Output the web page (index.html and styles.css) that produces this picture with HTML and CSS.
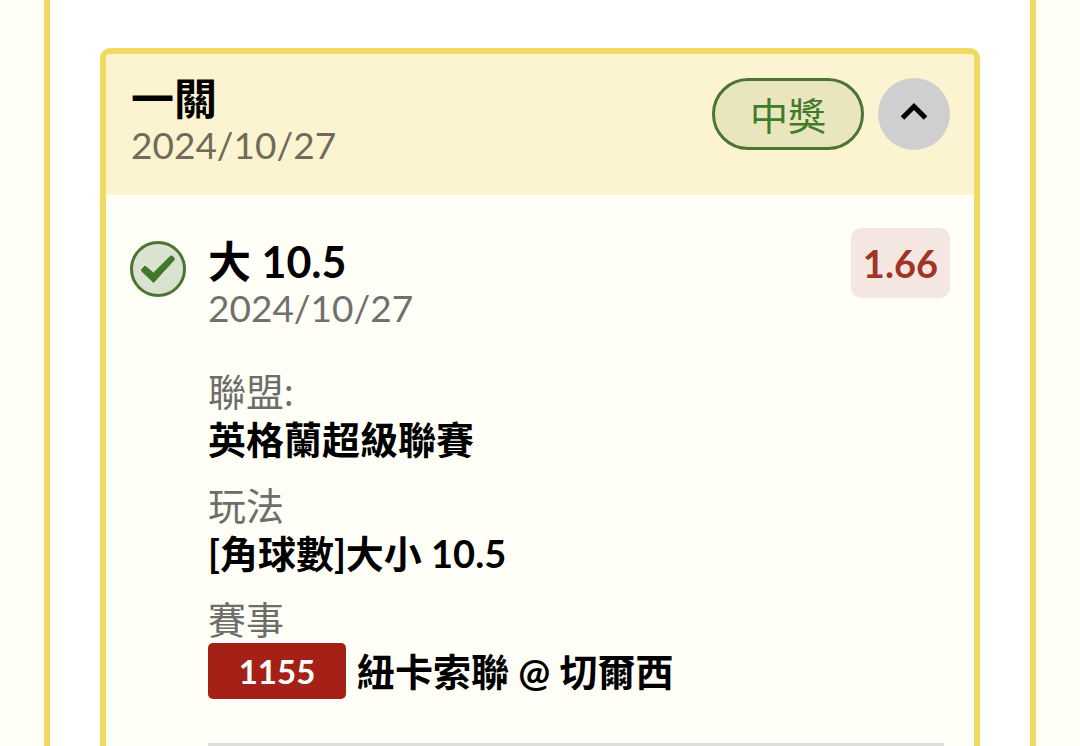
FILE: index.html
```html
<!DOCTYPE html>
<html lang="zh-Hant">
<head>
<meta charset="utf-8">
<meta name="viewport" content="width=device-width, initial-scale=1">
<title>一關</title>
<link rel="stylesheet" href="styles.css">
</head>
<body>
<main class="panel">
  <article class="ticket">
    <header class="ticket-head">
      <div class="heading">
        <h1 class="title">一關</h1>
        <time class="date" datetime="2024-10-27">2024/10/27</time>
      </div>
      <div class="actions">
        <span class="status">中獎</span>
        <button class="toggle" type="button" aria-label="收合" aria-expanded="true">
          <svg class="chevron" viewBox="0 0 28 20" aria-hidden="true"><path d="M2.500 16 14 4.500 25.500 16"/></svg>
        </button>
      </div>
    </header>
    <section class="bet">
      <div class="mark">
        <svg viewBox="0 0 56 56" aria-hidden="true"><path class="tick" d="M11.500 28.500 15 25 23.500 32 40 15.500Q43 13.500 44.500 18.500L23.500 41.500 11.500 30Z"/></svg>
      </div>
      <div class="bet-main">
        <div class="bet-head">
          <div class="heading">
            <h2 class="title">大 10.5</h2>
            <time class="date" datetime="2024-10-27">2024/10/27</time>
          </div>
          <span class="odds">1.66</span>
        </div>
        <dl class="details">
          <div><dt>聯盟:</dt><dd>英格蘭超級聯賽</dd></div>
          <div><dt>玩法</dt><dd>[角球數]大小 10.5</dd></div>
          <div><dt>賽事</dt><dd class="match"><span class="code">1155</span><span>紐卡索聯 @ 切爾西</span></dd></div>
        </dl>
        <hr class="rule">
      </div>
    </section>
  </article>
</main>
</body>
</html>
```
FILE: styles.css
```css
* {
  box-sizing: border-box;
}

body {
  margin: 0;
  height: 100vh;
  overflow: hidden;
  background: #fffff7;
  color: #000;
  font-family: Lato, "Noto Sans CJK TC", sans-serif;
  font-size: 38px;
  line-height: 48px;
}

.panel {
  min-height: 100vh;
  margin: 0 44px;
  padding: 48px 50px 0;
  border: solid #f0da62;
  border-width: 0 6px;
  background: #fff;
}

.ticket {
  border: 6px solid #f0da62;
  border-radius: 10px;
  background: #fffff7;
  overflow: hidden;
}

.ticket-head {
  display: flex;
  justify-content: space-between;
  align-items: flex-start;
  padding: 22px 24px 27px 25px;
  background: #fcf3d0;
}

.title {
  margin: 0;
  font-size: 43px;
  font-weight: 700;
  line-height: 46px;
}

.date {
  display: block;
  font-size: 37px;
  line-height: 46px;
  color: #6f6b5a;
}

.actions {
  display: flex;
  gap: 14px;
  padding-top: 2px;
}

.status {
  height: 72px;
  padding: 0 35px;
  border: 3px solid #4c7433;
  border-radius: 36px;
  background: #e9e6be;
  color: #427a2d;
  line-height: 68px;
}

.toggle {
  display: grid;
  place-items: center;
  width: 72px;
  height: 72px;
  padding: 0;
  border: 0;
  border-radius: 50%;
  background: #cfcfd0;
}

.chevron {
  width: 28px;
  height: 20px;
  margin-bottom: 4px;
  fill: none;
  stroke: #000;
  stroke-width: 5;
}

.bet {
  display: flex;
  gap: 22px;
  padding: 33px 24px 24px;
}

.mark {
  flex: none;
  width: 56px;
  height: 56px;
  margin-top: 13px;
  border: 3px solid #4c7433;
  border-radius: 50%;
  background: #dae2d0;
}

.mark svg {
  display: block;
  width: 56px;
  height: 56px;
  margin: -3px;
}

.tick {
  fill: #41792a;
  stroke: #41792a;
  stroke-width: 1;
  stroke-linejoin: round;
}

.bet-main {
  flex: 1;
}

.bet-head {
  display: flex;
  justify-content: space-between;
  align-items: flex-start;
}

.bet-head .heading {
  padding-top: 11px;
}

.bet-head .date {
  color: #70706d;
}

.odds {
  padding: 0 12px;
  border-radius: 10px;
  background: #f4e7e1;
  color: #a23327;
  font-weight: 700;
  line-height: 70px;
}

.details {
  display: grid;
  gap: 18px;
  margin: 36px 0 0;
}

.details dt {
  color: #6d6d69;
}

.details dd {
  margin: 0;
  font-weight: 700;
}

.details .match {
  display: flex;
  align-items: center;
  gap: 11px;
}

.code {
  width: 138px;
  border-radius: 5px;
  background: #a52117;
  color: #fff;
  font-size: 33px;
  line-height: 56px;
  text-align: center;
}

.rule {
  height: 6px;
  margin: 44px 6px 0 0;
  border: 0;
  background: #deded8;
}
```
